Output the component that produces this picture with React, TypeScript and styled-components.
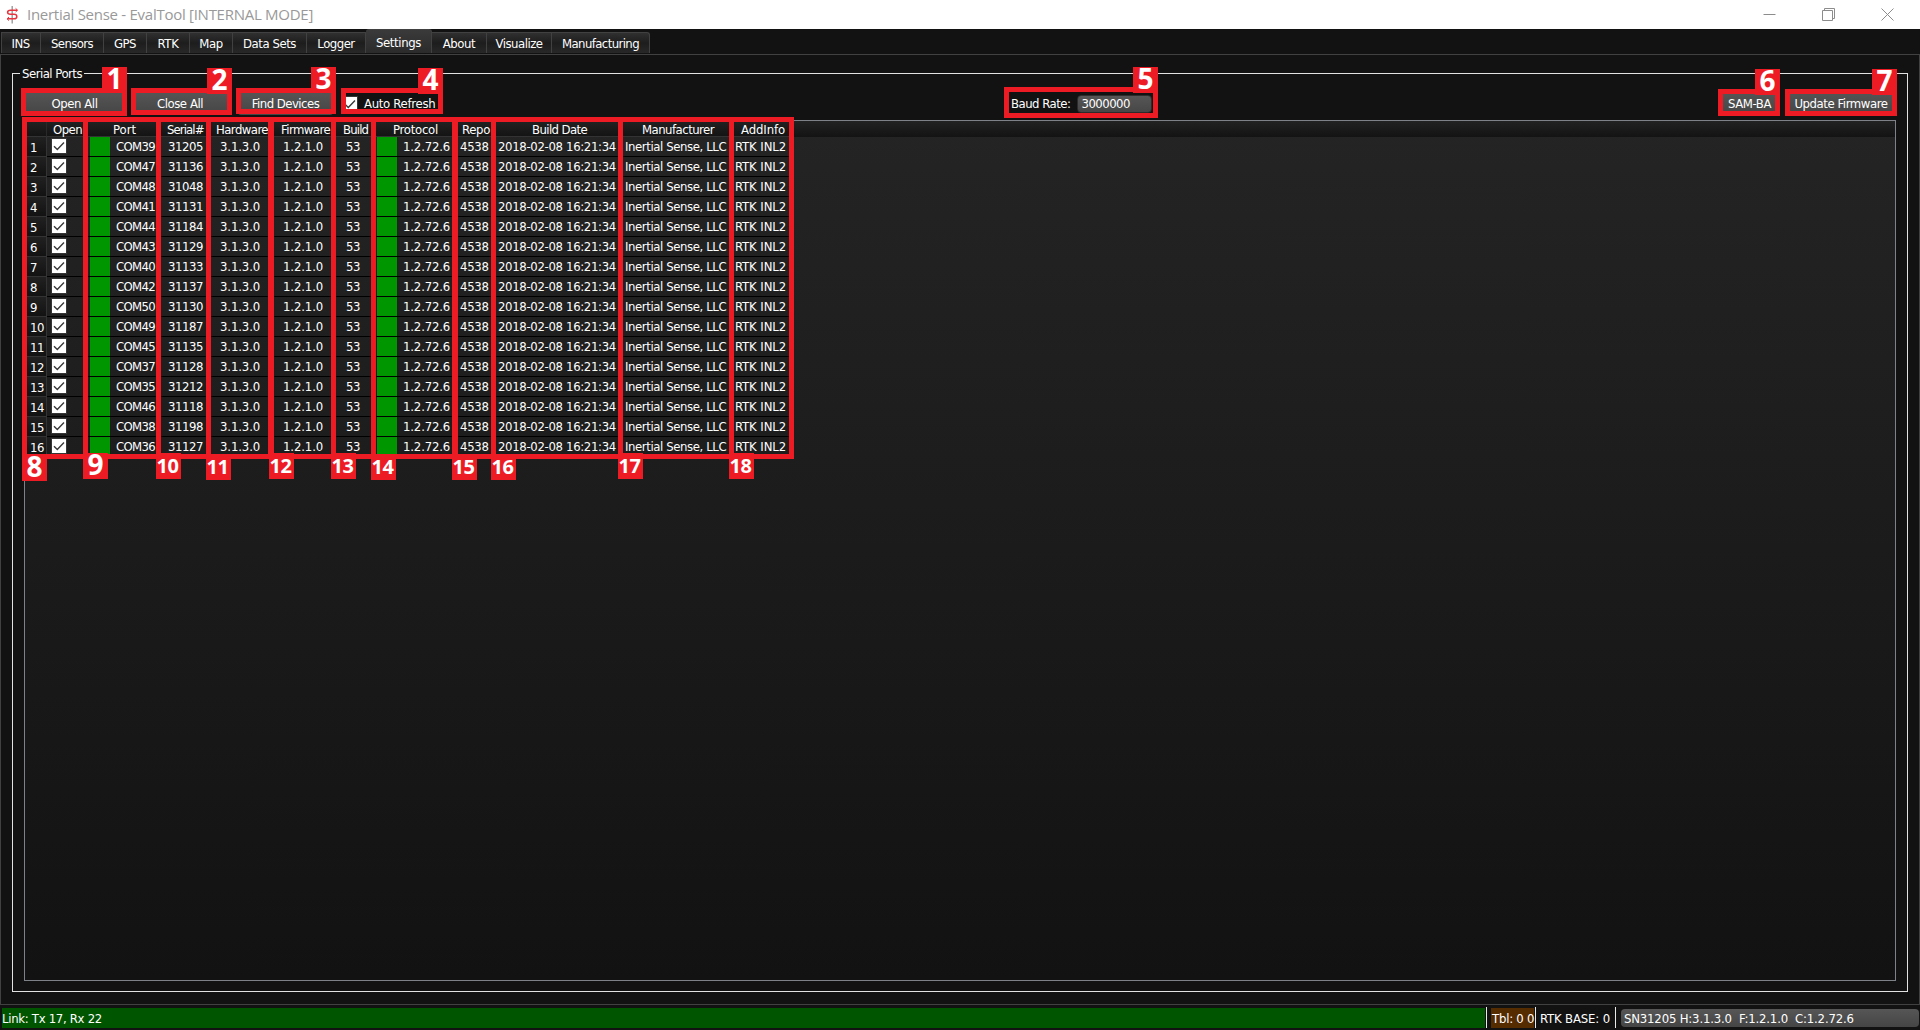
import React from 'react';
import styled, { createGlobalStyle } from 'styled-components';

const GlobalStyle = createGlobalStyle`
  *, *::before, *::after { box-sizing: border-box; }
  body {
    margin: 0;
    background: #121212;
    overflow: hidden;
  }
`;

const Window = styled.div`
  position: relative;
  display: flex;
  flex-direction: column;
  width: 1920px;
  height: 1030px;
  background: #121212;
  color: #fff;
  font: 13px/16px 'DejaVu Sans Condensed', 'DejaVu Sans', sans-serif;
  white-space: pre;
  overflow: hidden;
`;

const Label = styled.span<{ $ls?: number }>`
  letter-spacing: ${(p) => p.$ls ?? -0.4}px;
`;

/* ---------- title bar ---------- */

const TitleBar = styled.header`
  display: flex;
  align-items: center;
  flex: none;
  height: 29px;
  padding: 0 26px 0 6px;
  background: #fff;
`;

const Title = styled.h1`
  margin: -2px auto 0 8px;
  color: #999;
  font: 400 15px/28px 'Open Sans', 'Noto Sans', sans-serif;
  letter-spacing: -0.27px;
`;

const WindowControls = styled.div`
  display: flex;
  gap: 46px;
  margin-top: -1px;

  svg {
    display: block;
    fill: none;
    stroke: #8c8c8c;
  }
`;

/* ---------- tabs ---------- */

const TabBar = styled.nav`
  display: flex;
  align-items: flex-end;
  flex: none;
  height: 24px;
  padding-left: 1px;
`;

const Tab = styled.button<{ $w: number; $active?: boolean }>`
  display: flex;
  align-items: center;
  justify-content: center;
  width: ${(p) => p.$w}px;
  height: ${(p) => (p.$active ? 24 : 21)}px;
  padding: ${(p) => (p.$active ? '2px 0 0' : '2px 0 0')};
  border: solid #414141;
  border-width: 1px 1px 0 0;
  border-radius: ${(p) => (p.$active ? '3px 3px 0 0' : '0')};
  background: ${(p) =>
    p.$active ? 'linear-gradient(#3a3a3a, #2b2b2b)' : 'linear-gradient(#303030, #1d1d1d 50%, #282828)'};
  color: #fff;
  font: inherit;

  &:first-child {
    padding-right: 1px;
    border-left-width: 1px;
  }
  &:last-child { border-top-right-radius: 3px; }
`;

const Pane = styled.main`
  display: flex;
  flex: none;
  height: 951px;
  margin-top: 1px;
  padding: 10px 11px 12px;
  border: 1px solid #414141;
`;

/* ---------- serial ports group ---------- */

const Group = styled.fieldset`
  display: flex;
  flex-direction: column;
  flex: 1;
  min-width: 0;
  margin: 0;
  padding: 0 11px 10px;
  border: 1px solid #e2e2e2;
`;

const Legend = styled.legend`
  height: 16px;
  margin-left: -4px;
  padding: 0 2px;
  line-height: 18px;
`;

const Toolbar = styled.div`
  display: flex;
  align-items: flex-start;
  height: 39px;
  padding-top: 10px;
`;

const LeftTools = styled.div`
  display: flex;
  width: 987px;
`;

const RightTools = styled.div`
  display: flex;
  gap: 9px;
  margin: 0 1px 0 auto;
`;

const ToolButton = styled.button<{ $w: number; $ml?: number }>`
  width: ${(p) => p.$w}px;
  height: 24px;
  margin-left: ${(p) => p.$ml ?? 0}px;
  padding: 1px 0 0;
  border: 0;
  border-radius: 3px;
  background: linear-gradient(#565656, #454545);
  color: #fff;
  font: inherit;
`;

const CheckOption = styled.label`
  display: flex;
  align-items: center;
  gap: 6px;
  height: 25px;
  margin-left: 9px;
`;

const BaudField = styled.div`
  display: flex;
  align-items: center;
  gap: 7px;
  height: 25px;
`;

const Combo = styled.div`
  width: 75px;
  height: 18px;
  padding-left: 3px;
  border: 1px solid #2c2c2c;
  border-radius: 4px;
  background: linear-gradient(#565656, #474747);
`;

const CheckSquare = styled.span`
  display: block;
  width: 16px;
  height: 16px;
  border: 1px solid #353535;
  background: #fff;

  svg {
    display: block;
    fill: none;
    stroke: #3a3a3a;
    stroke-width: 1.4;
  }
`;

const Checked = () => (
  <CheckSquare>
    <svg width="14" height="14" viewBox="0 0 14 14">
      <path d="M2 7.2 5.3 10.4 12 3.6" />
    </svg>
  </CheckSquare>
);

/* ---------- table ---------- */

const TableFrame = styled.section`
  flex: 1;
  border: 1px solid #7f8188;
  background: linear-gradient(#242424, #121212);
`;

const columns = '22px 39px 72px 50px 62px 63px 40px 82px 38px 127px 111px 60px';

const HeaderRow = styled.div`
  display: grid;
  grid-template: 16px / ${columns};
  background: linear-gradient(#222, #131313);
`;

const HeaderCell = styled.div<{ $pl?: number }>`
  padding-left: ${(p) => p.$pl ?? 0}px;
  border-right: 1px solid #292929;
  border-bottom: 1px solid #333;
  line-height: 17px;
`;

const Row = styled.div`
  display: grid;
  grid-template: 20px / ${columns};
`;

const RowNumber = styled.div`
  padding: 3px 0 0 5px;
  border-right: 1px solid #333;
  border-bottom: 1px solid #333;
  background: linear-gradient(#212121, #121212);
  line-height: 16px;
`;

const Cell = styled.div<{ $pl?: number }>`
  display: flex;
  padding-left: ${(p) => p.$pl ?? 0}px;
  border-bottom: 1px solid #000;
  line-height: 20px;
`;

const Swatch = styled.span`
  width: 20px;
  margin-right: 6px;
  background: #009600;
`;

const CheckCell = styled(Cell)`
  padding: 1px 0 0 4px;
`;

/* ---------- status bar ---------- */

const StatusBar = styled.footer`
  display: flex;
  align-items: flex-start;
  flex: none;
  height: 25px;
  padding: 3px 0 0 2px;
  line-height: 21px;
`;

const Link = styled.div`
  width: 1483px;
  height: 20px;
  background: #005500;
`;

const TimeTable = styled.div`
  width: 43px;
  height: 20px;
  margin-left: 4px;
  padding-left: 1px;
  background: #552b00;
`;

const Divider = styled.i`
  width: 1px;
  height: 21px;
  margin: -1px 0 0 1px;
  background: #e8e8e8;
`;

const Base = styled.div`
  width: 78px;
  padding-left: 4px;
`;

const DeviceCombo = styled.div`
  flex: 1;
  height: 18px;
  margin: 1px 1px 0 5px;
  padding-left: 3px;
  border-radius: 4px;
  background: linear-gradient(#565656, #454545);
  line-height: 19px;
`;

/* ---------- numbered callouts drawn over the window ---------- */

const Frame = styled.div<{ $x: number; $y: number; $w: number; $h: number }>`
  position: absolute;
  left: ${(p) => p.$x}px;
  top: ${(p) => p.$y}px;
  width: ${(p) => p.$w}px;
  height: ${(p) => p.$h}px;
  border: 5px solid #ed1c24;
`;

const Badge = styled.b<{ $x: number; $y: number; $small?: boolean }>`
  position: absolute;
  left: ${(p) => p.$x}px;
  top: ${(p) => p.$y}px;
  width: 25px;
  height: 26px;
  padding-right: ${(p) => (p.$small ? 2 : 0)}px;
  background: #ed1c24;
  text-align: center;
  font: 700 ${(p) => (p.$small ? '20px/26px' : '28px/23px')} 'Noto Sans', 'Open Sans', sans-serif;
  letter-spacing: ${(p) => (p.$small ? -0.4 : 0)}px;
`;

type Spec = [x: number, y: number, w: number, h: number];

const toolFrames: Spec[] = [
  [21, 88, 106, 28],
  [131, 88, 101, 27],
  [236, 88, 100, 26],
  [341, 88, 102, 26],
  [1004, 87, 154, 31],
  [1718, 89, 62, 27],
  [1785, 89, 112, 27],
];

const toolBadges = [
  [102, 67],
  [207, 68],
  [311, 67],
  [418, 68],
  [1133, 67],
  [1755, 69],
  [1872, 69],
];

/* left and right inner edges of each framed table column, and its badge */
const columnFrames: [number, number, number, number][] = [
  [27, 83, 22, 455],
  [88, 156, 83, 453],
  [161, 206, 156, 453],
  [211, 269, 206, 454],
  [273, 331, 269, 453],
  [336, 371, 331, 453],
  [376, 452, 371, 454],
  [458, 491, 452, 454],
  [496, 618, 491, 454],
  [623, 729, 618, 453],
  [734, 789, 729, 453],
];

const Callouts = () => (
  <>
    {toolFrames.map(([x, y, w, h]) => (
      <Frame key={x} $x={x} $y={y} $w={w} $h={h} />
    ))}
    {columnFrames.map(([l, r]) => (
      <Frame key={l} $x={l - 5} $y={117} $w={r - l + 10} $h={342} />
    ))}
    {toolBadges.map(([x, y], i) => (
      <Badge key={x} $x={x} $y={y}>{i + 1}</Badge>
    ))}
    {columnFrames.map(([, , x, y], i) => (
      <Badge key={x} $x={x} $y={y} $small={i > 1}>{i + 8}</Badge>
    ))}
  </>
);

/* ---------- data ---------- */

const tabs: [string, number, number][] = [
  ['INS', 40, -0.5],
  ['Sensors', 63, -0.6],
  ['GPS', 43, -0.5],
  ['RTK', 43, -0.3],
  ['Map', 43, -0.4],
  ['Data Sets', 74, -0.43],
  ['Logger', 59, -0.5],
  ['Settings', 66, -0.37],
  ['About', 55, -0.4],
  ['Visualize', 65, -0.5],
  ['Manufacturing', 98, -0.59],
];

const headers: [string, number, number][] = [
  ['', 0, 0],
  ['Open', 6, -0.55],
  ['Port', 27, 0],
  ['Serial#', 9, -0.9],
  ['Hardware', 8, -0.55],
  ['Firmware', 11, -0.55],
  ['Build', 10, -0.85],
  ['Protocol', 20, -0.26],
  ['Repo', 7, -0.32],
  ['Build Date', 39, -0.6],
  ['Manufacturer', 22, -0.52],
  ['AddInfo', 10, -0.1],
];

const devices: [string, string][] = [
  ['COM39', '31205'],
  ['COM47', '31136'],
  ['COM48', '31048'],
  ['COM41', '31131'],
  ['COM44', '31184'],
  ['COM43', '31129'],
  ['COM40', '31133'],
  ['COM42', '31137'],
  ['COM50', '31130'],
  ['COM49', '31187'],
  ['COM45', '31135'],
  ['COM37', '31128'],
  ['COM35', '31212'],
  ['COM46', '31118'],
  ['COM38', '31198'],
  ['COM36', '31127'],
];

export default function App() {
  return (
    <Window>
      <GlobalStyle />
      <TitleBar>
        <svg width="13" height="18" viewBox="0 0 13 18" fill="none">
          <path d="M6.2 0V17.5" stroke="#999" strokeWidth="1.4" />
          <path
            d="M11.2 4.2H4.6C2.6 4.2 1.6 5 1.6 6.2S2.6 8.2 4.6 8.2H8C9.8 8.2 10.8 9 10.8 10.4S9.8 12.8 8 12.8H1.4"
            stroke="#e5343d"
            strokeWidth="1.5"
          />
          <path d="M9.6 2.4 11.6 4.2 9.6 6M3 11 1 12.8 3 14.6" stroke="#e5343d" />
        </svg>
        <Title>Inertial Sense - EvalTool [INTERNAL MODE]</Title>
        <WindowControls>
          <svg width="13" height="13" viewBox="0 0 13 13">
            <path d="M0.5 6.5H12.5" />
          </svg>
          <svg width="13" height="13" viewBox="0 0 13 13">
            <path d="M.5 2.5H10.5V12.5H.5ZM2.5 2.5V.5H12.5V10.5H10.5" />
          </svg>
          <svg width="13" height="13" viewBox="0 0 13 13">
            <path d="M.5.5 12.5 12.5M12.5.5.5 12.5" />
          </svg>
        </WindowControls>
      </TitleBar>

      <TabBar>
        {tabs.map(([name, w, ls]) => (
          <Tab key={name} $w={w} $active={name === 'Settings'}>
            <Label $ls={ls}>{name}</Label>
          </Tab>
        ))}
      </TabBar>

      <Pane>
        <Group>
          <Legend><Label $ls={-0.5}>Serial Ports</Label></Legend>
          <Toolbar>
            <LeftTools>
              <ToolButton $w={101}><Label $ls={-0.44}>Open All</Label></ToolButton>
              <ToolButton $w={96} $ml={7}><Label $ls={-0.44}>Close All</Label></ToolButton>
              <ToolButton $w={95} $ml={10}><Label $ls={-0.52}>Find Devices</Label></ToolButton>
              <CheckOption>
                <Checked />
                <Label $ls={-0.3}>Auto Refresh</Label>
              </CheckOption>
            </LeftTools>
            <BaudField>
              <Label $ls={-0.5}>Baud Rate:</Label>
              <Combo><Label $ls={-0.52}>3000000</Label></Combo>
            </BaudField>
            <RightTools>
              <ToolButton $w={57}><Label $ls={-0.4}>SAM-BA</Label></ToolButton>
              <ToolButton $w={108}><Label $ls={-0.43}>Update Firmware</Label></ToolButton>
            </RightTools>
          </Toolbar>
          <TableFrame>
            <HeaderRow>
              {headers.map(([name, pl, ls]) => (
                <HeaderCell key={name} $pl={pl}><Label $ls={ls}>{name}</Label></HeaderCell>
              ))}
            </HeaderRow>
            {devices.map(([port, serial], i) => (
              <Row key={port}>
                <RowNumber><Label $ls={-0.4}>{i + 1}</Label></RowNumber>
                <CheckCell><Checked /></CheckCell>
                <Cell $pl={4}><Swatch /><Label $ls={-0.65}>{port}</Label></Cell>
                <Cell $pl={10}><Label $ls={-0.44}>{serial}</Label></Cell>
                <Cell $pl={12}><Label $ls={-0.12}>3.1.3.0</Label></Cell>
                <Cell $pl={13}><Label $ls={-0.12}>1.2.1.0</Label></Cell>
                <Cell $pl={13}><Label $ls={-0.4}>53</Label></Cell>
                <Cell $pl={4}><Swatch /><Label $ls={-0.15}>1.2.72.6</Label></Cell>
                <Cell $pl={5}><Label $ls={-0.3}>4538</Label></Cell>
                <Cell $pl={5}><Label $ls={-0.33}>2018-02-08 16:21:34</Label></Cell>
                <Cell $pl={5}><Label $ls={-0.4}>Inertial Sense, LLC</Label></Cell>
                <Cell $pl={4}><Label $ls={-0.1}>RTK INL2</Label></Cell>
              </Row>
            ))}
          </TableFrame>
        </Group>
      </Pane>

      <StatusBar>
        <Link><Label $ls={-0.3}>Link: Tx 17, Rx 22</Label></Link>
        <Divider />
        <TimeTable><Label $ls={-0.22}>Tbl: 0 0</Label></TimeTable>
        <Divider />
        <Base><Label $ls={-0.15}>RTK BASE: 0</Label></Base>
        <Divider />
        <DeviceCombo><Label $ls={-0.17}>SN31205 H:3.1.3.0  F:1.2.1.0  C:1.2.72.6</Label></DeviceCombo>
      </StatusBar>

      <Callouts />
    </Window>
  );
}
